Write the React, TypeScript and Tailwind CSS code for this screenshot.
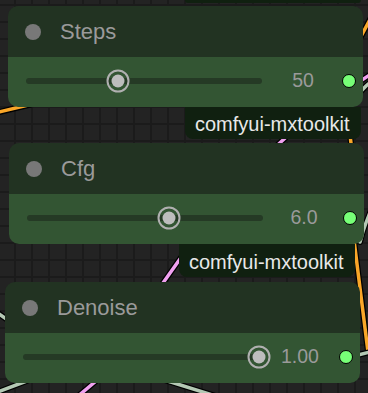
import React from "react";

type NodeProps = { title: string; frac: number; value: string; className: string };

function GraphNode({ title, frac, value, className }: NodeProps) {
  return (
    <div className={`relative z-10 w-[355px] shrink-0 overflow-hidden rounded-[10px] ${className}`}>
      <div className="flex h-[51px] items-center bg-[#223322] pl-[17px]">
        <div className="h-[16px] w-[16px] rounded-full bg-[#787878]" />
        <span className="ml-[19px] text-[22px] text-[#9a9a9a]">{title}</span>
      </div>
      <div className="flex h-[50px] items-center bg-[#335533] pb-[3px] pl-[18px]">
        <div className="relative h-[6px] w-[236px] rounded-full bg-[#253a25]">
          <div
            className="absolute top-1/2 flex h-[23px] w-[23px] -translate-x-1/2 -translate-y-1/2 items-center justify-center rounded-full border-2 border-[#b0b0b0]"
            style={{ left: `${frac * 100}%` }}
          >
            <div className="h-[13px] w-[13px] rounded-full bg-[#bdbdbd]" />
          </div>
        </div>
        <span className="ml-[4px] w-[74px] text-center text-[19.5px] text-[#9a9a9a]">{value}</span>
        <div className="ml-auto mr-[7.5px] h-[14px] w-[14px] rounded-full border-[1.5px] border-black bg-[#77ff77]" />
      </div>
    </div>
  );
}

function Tag({ className }: { className: string }) {
  return (
    <div
      className={`relative z-10 flex w-[176px] shrink-0 items-end rounded-b-[8px] bg-[#102010] pb-[3px] pl-[10px] text-[20px] leading-[23px] text-[#e8e8e8] ${className}`}
    >
      comfyui-mxtoolkit
    </div>
  );
}

const wires: { d: string; c: string }[] = [
  { d: "M -5 113 L 45 101", c: "#f9a628" },
  { d: "M 358 42 L 374 12", c: "#f9a628" },
  { d: "M 356 84 L 374 72", c: "#f0a0f0" },
  { d: "M 356 98 Q 364 86 374 80", c: "#b4c8b4" },
  { d: "M 346 100 L 352 152", c: "#f9a628" },
  { d: "M 270 152 L 296 128", c: "#f0a0f0" },
  { d: "M 360 242 Q 365 222 374 204", c: "#b4c8b4" },
  { d: "M 353 232 L 368 352", c: "#f9a628" },
  { d: "M 350 357 L 374 351", c: "#b4c8b4" },
  { d: "M 158 290 L 192 242", c: "#f0a0f0" },
  { d: "M 77 397 L 102 376", c: "#f0a0f0" },
  { d: "M -5 393 L 32 379", c: "#b4c8b4" },
  { d: "M 158 378 L 222 398", c: "#b4c8b4" },
  { d: "M -5 311 L 12 323", c: "#b4c8b4" },
];

export default function App() {
  return (
    <div className="relative flex h-[393px] w-[368px] flex-col overflow-hidden bg-[#232323] bg-[linear-gradient(to_right,#1b1b1b_2px,transparent_2px),linear-gradient(to_bottom,#1b1b1b_2px,transparent_2px)] bg-[size:17px_17px] bg-[position:14px_4px] font-['Liberation_Sans',Arial,sans-serif]">
      <svg className="absolute inset-0" width="368" height="393" viewBox="0 0 368 393">
        {wires.map((w, i) => (
          <g key={i} fill="none" strokeLinecap="round">
            <path d={w.d} stroke="#000" strokeWidth={6} />
            <path d={w.d} stroke={w.c} strokeWidth={3.5} />
          </g>
        ))}
      </svg>
      <div className="relative z-10 ml-[185px] h-[3px] w-[176px] shrink-0 rounded-b-[3px] bg-[#102010]" />
      <GraphNode title="Steps" frac={0.389} value="50" className="ml-[8px] mt-[3px]" />
      <Tag className="ml-[185px] h-[32px]" />
      <GraphNode title="Cfg" frac={0.6} value="6.0" className="ml-[9px] mt-[4px]" />
      <Tag className="ml-[179px] h-[33px]" />
      <GraphNode title="Denoise" frac={1} value="1.00" className="ml-[5px] mt-[5px]" />
    </div>
  );
}
